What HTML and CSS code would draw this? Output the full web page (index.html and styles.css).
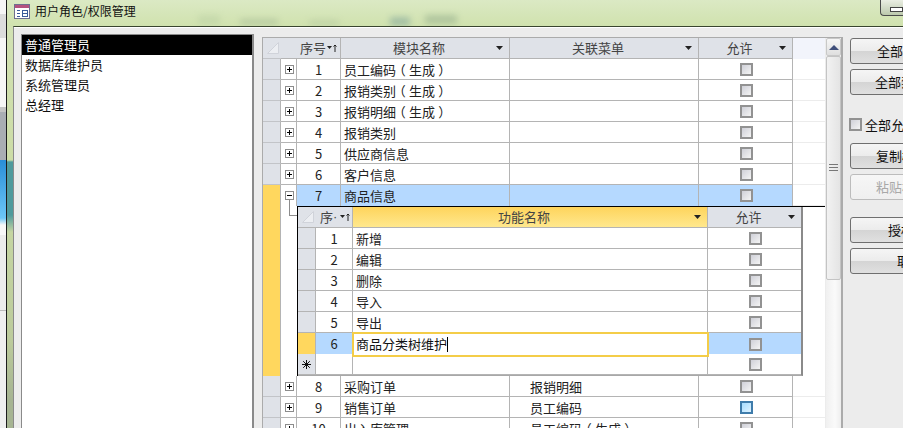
FILE: index.html
```html
<!DOCTYPE html>
<html lang="zh-CN">
<head>
<meta charset="utf-8">
<title>用户角色/权限管理</title>
<link rel="stylesheet" href="styles.css">
</head>
<body>
<svg class="defs" width="0" height="0" aria-hidden="true">
  <symbol id="plus" viewBox="0 0 9 9"><rect x=".5" y=".5" width="8" height="8" fill="#fff" stroke="#8c8c8c"/><path d="M2 4.5h5M4.5 2v5" stroke="#000" fill="none"/></symbol>
  <symbol id="minus" viewBox="0 0 9 9"><rect x=".5" y=".5" width="8" height="8" fill="#fff" stroke="#8c8c8c"/><path d="M2 4.5h5" stroke="#000" fill="none"/></symbol>
  <symbol id="arrow" viewBox="0 0 7 4"><path d="M0 0h7L3.5 4z" fill="#222"/></symbol>
  <symbol id="sort" viewBox="0 0 11 8"><path d="M0 2h5L2.5 5z" fill="#222"/><path d="M8 8V1M6.5 2.5 8 1l1.5 1.5" stroke="#222" fill="none"/></symbol>
  <symbol id="corner" viewBox="0 0 12 12"><path d="M11.5 .5v11H.5z" fill="#eceef2" stroke="#d0d3da"/></symbol>
  <symbol id="star" viewBox="0 0 9 9"><path d="M4.5 0v9M0 4.5h9M1.2 1.2l6.6 6.6M7.8 1.2 1.2 7.8" stroke="#111" fill="none"/></symbol>
</svg>
<div class="screen">
  <div class="behind"></div>
  <div class="window">
    <header class="titlebar">
      <svg class="form-icon" width="16" height="15" viewBox="0 0 16 15" aria-hidden="true">
        <rect x=".5" y=".5" width="15" height="14" fill="#fff" stroke="#6f6f8f"/>
        <rect x="1" y="1" width="14" height="3" fill="#b5527f"/>
        <path d="M3 6.5h3M3 9.5h3M3 12.5h3" stroke="#3a5c9a"/>
        <rect x="8.5" y="6.5" width="5" height="6" fill="#fff" stroke="#3a5c9a"/>
        <path d="M8 9.5h5" stroke="#3a5c9a"/>
      </svg>
      <span class="title">用户角色/权限管理</span>
      <span class="blur blur-a"></span>
      <span class="blur blur-b"></span>
      <span class="blur blur-c"></span>
      <span class="blur blur-d"></span>
      <span class="blur blur-e"></span>
      <span class="winbtn"><span class="winbtn-glyph"></span></span>
    </header>
    <main class="frame">
      <ul class="rolelist">
        <li class="role role-selected">普通管理员</li>
        <li class="role">数据库维护员</li>
        <li class="role">系统管理员</li>
        <li class="role">总经理</li>
      </ul>

      <section class="sheet">
        <div class="sheet-body">
          <div class="row row-head">
            <div class="cell sel head-corner"><svg class="corner" width="12" height="12"><use href="#corner"/></svg></div>
            <div class="cell exp head-exp"></div>
            <div class="cell hd hd-seq">序号<svg class="sort" width="11" height="8"><use href="#sort"/></svg></div>
            <div class="cell hd"><span class="hd-label">模块名称</span><svg class="arrow" width="7" height="4"><use href="#arrow"/></svg></div>
            <div class="cell hd"><span class="hd-label">关联菜单</span><svg class="arrow" width="7" height="4"><use href="#arrow"/></svg></div>
            <div class="cell hd"><span class="hd-label">允许</span><svg class="arrow" width="7" height="4"><use href="#arrow"/></svg></div>
            <div class="blank blank-head"></div>
          </div>

          <div class="row"><div class="cell sel"></div><div class="cell exp"><svg width="9" height="9"><use href="#plus"/></svg></div><div class="cell num">1</div><div class="cell txt">员工编码<span class="paren">（</span>生成<span class="paren">）</span></div><div class="cell menu"></div><div class="cell chk"><span class="box"></span></div><div class="blank"></div></div>
          <div class="row"><div class="cell sel"></div><div class="cell exp"><svg width="9" height="9"><use href="#plus"/></svg></div><div class="cell num">2</div><div class="cell txt">报销类别<span class="paren">（</span>生成<span class="paren">）</span></div><div class="cell menu"></div><div class="cell chk"><span class="box"></span></div><div class="blank"></div></div>
          <div class="row"><div class="cell sel"></div><div class="cell exp"><svg width="9" height="9"><use href="#plus"/></svg></div><div class="cell num">3</div><div class="cell txt">报销明细<span class="paren">（</span>生成<span class="paren">）</span></div><div class="cell menu"></div><div class="cell chk"><span class="box"></span></div><div class="blank"></div></div>
          <div class="row"><div class="cell sel"></div><div class="cell exp"><svg width="9" height="9"><use href="#plus"/></svg></div><div class="cell num">4</div><div class="cell txt">报销类别</div><div class="cell menu"></div><div class="cell chk"><span class="box"></span></div><div class="blank"></div></div>
          <div class="row"><div class="cell sel"></div><div class="cell exp"><svg width="9" height="9"><use href="#plus"/></svg></div><div class="cell num">5</div><div class="cell txt">供应商信息</div><div class="cell menu"></div><div class="cell chk"><span class="box"></span></div><div class="blank"></div></div>
          <div class="row"><div class="cell sel"></div><div class="cell exp"><svg width="9" height="9"><use href="#plus"/></svg></div><div class="cell num">6</div><div class="cell txt">客户信息</div><div class="cell menu"></div><div class="cell chk"><span class="box"></span></div><div class="blank"></div></div>
          <div class="row row-current"><div class="cell sel sel-active"></div><div class="cell exp"><svg width="9" height="9"><use href="#minus"/></svg></div><div class="cell num hi">7</div><div class="cell txt hi">商品信息</div><div class="cell menu hi"></div><div class="cell chk hi"><span class="box"></span></div><div class="blank"></div></div>

          <div class="detail">
            <div class="detail-sel"></div>
            <div class="detail-tree"><span class="tree-line"></span></div>
            <div class="subwrap">
              <div class="subtable">
                <div class="subrow subrow-head">
                  <div class="cell sub-sel head-corner"><svg class="corner" width="12" height="12"><use href="#corner"/></svg></div>
                  <div class="cell hd hd-subseq"><span>序</span><span class="cut-dot">·</span><svg class="sort" width="11" height="8"><use href="#sort"/></svg></div>
                  <div class="cell hd hd-active"><span class="hd-label">功能名称</span><svg class="arrow" width="7" height="4"><use href="#arrow"/></svg></div>
                  <div class="cell hd hd-last"><span class="hd-label">允许</span><svg class="arrow" width="7" height="4"><use href="#arrow"/></svg></div>
                </div>
                <div class="subrow"><div class="cell sub-sel"></div><div class="cell num">1</div><div class="cell txt">新增</div><div class="cell chk chk-last"><span class="box"></span></div></div>
                <div class="subrow"><div class="cell sub-sel"></div><div class="cell num">2</div><div class="cell txt">编辑</div><div class="cell chk chk-last"><span class="box"></span></div></div>
                <div class="subrow"><div class="cell sub-sel"></div><div class="cell num">3</div><div class="cell txt">删除</div><div class="cell chk chk-last"><span class="box"></span></div></div>
                <div class="subrow"><div class="cell sub-sel"></div><div class="cell num">4</div><div class="cell txt">导入</div><div class="cell chk chk-last"><span class="box"></span></div></div>
                <div class="subrow"><div class="cell sub-sel"></div><div class="cell num">5</div><div class="cell txt">导出</div><div class="cell chk chk-last"><span class="box"></span></div></div>
                <div class="subrow"><div class="cell sub-sel sel-active"></div><div class="cell num hi">6</div><div class="cell txt editing">商品分类树维护<span class="caret"></span></div><div class="cell chk chk-last hi"><span class="box"></span></div></div>
                <div class="subrow"><div class="cell sub-sel star-cell"><svg width="9" height="9"><use href="#star"/></svg></div><div class="cell num"></div><div class="cell txt"></div><div class="cell chk chk-last"><span class="box"></span></div></div>
              </div>
            </div>
          </div>

          <div class="row"><div class="cell sel"></div><div class="cell exp"><svg width="9" height="9"><use href="#plus"/></svg></div><div class="cell num">8</div><div class="cell txt">采购订单</div><div class="cell menu">报销明细</div><div class="cell chk"><span class="box"></span></div><div class="blank"></div></div>
          <div class="row"><div class="cell sel"></div><div class="cell exp"><svg width="9" height="9"><use href="#plus"/></svg></div><div class="cell num">9</div><div class="cell txt">销售订单</div><div class="cell menu">员工编码</div><div class="cell chk"><span class="box box-hover"></span></div><div class="blank"></div></div>
          <div class="row"><div class="cell sel"></div><div class="cell exp"><svg width="9" height="9"><use href="#plus"/></svg></div><div class="cell num">10</div><div class="cell txt">出入库管理</div><div class="cell menu">员工编码<span class="paren">（</span>生成<span class="paren">）</span></div><div class="cell chk"><span class="box"></span></div><div class="blank"></div></div>
        </div>
        <div class="scrollbar">
          <div class="scroll-up"><span class="scroll-tri"></span></div>
          <div class="scroll-thumb"><span class="grip"></span></div>
        </div>
      </section>

      <aside class="actions">
        <div class="btn-group">
          <button class="btn ind-27">全部允许</button>
          <button class="btn ind-25">全部禁止</button>
        </div>
        <label class="allow-all"><span class="box box-plain"></span>全部允许</label>
        <div class="btn-group">
          <button class="btn ind-26">复制权限</button>
          <button class="btn btn-disabled ind-26">粘贴权限</button>
        </div>
        <div class="btn-group btn-group-last">
          <button class="btn ind-38">授权</button>
          <button class="btn ind-47">取消</button>
        </div>
      </aside>
    </main>
  </div>
</div>
</body>
</html>
```
FILE: styles.css
```css
* { box-sizing: border-box; }
html, body { margin: 0; padding: 0; height: 100%; overflow: hidden; }
body {
  font-family: "Noto Sans CJK SC", "Liberation Sans", sans-serif;
  font-size: 13px;
  color: #111;
  background: #ececec;
}
.defs { position: absolute; }
svg { display: block; }

.screen { display: flex; width: 903px; height: 428px; overflow: hidden; }

.behind {
  flex: 0 0 6px;
  background: linear-gradient(to bottom,
    #f6f6f6 0 14px, #dcdcdc 14px 38px, #f6f6f6 38px 107px, #c4c4c4 107px 112px,
    #a9adb3 112px 160px, #2a8ed8 160px, #6cc6f6 218px, #f8f8f8 225px 235px,
    #ececec 235px 310px, #bcbcbc 310px 311px, #efefef 311px 428px);
}

.window {
  flex: 1;
  min-width: 0;
  display: flex;
  flex-direction: column;
  border-left: 1px solid #1c1c1c;
  background: linear-gradient(to bottom,
    #d3e3b6 0, #ccdca6 160px, #4f9a9c 162px, #4f9a9c 215px, #c5d5a2 232px, #bccb9c 340px, #a6b492 400px);
}

.titlebar {
  position: relative;
  flex: 0 0 26px;
  display: flex;
  align-items: flex-start;
  padding: 4px 0 0 7px;
  gap: 5px;
  background: linear-gradient(to bottom, #dbe9c4, #d0e2ae);
  overflow: hidden;
}
.form-icon { flex: none; }
.title { font-size: 12px; line-height: 15px; margin-top: -1px; color: #111; }

.blur { position: absolute; background: #93a98a; filter: blur(3px); opacity: .4; }
.blur-a { left: 191px; top: 15px; width: 22px; height: 10px; background: #b4cba0; }
.blur-b { left: 233px; top: 19px; width: 38px; height: 6px; }
.blur-c { left: 302px; top: 20px; width: 30px; height: 6px; background: #a8bd98; }
.blur-d { left: 383px; top: 17px; width: 20px; height: 9px; background: #5f8b90; }
.blur-e { left: 418px; top: 15px; width: 32px; height: 9px; background: #7d9a7d; }

.winbtn {
  position: absolute;
  right: 0;
  top: -3px;
  width: 23px;
  height: 19px;
  border: 1px solid #4b4b4b;
  border-right: 0;
  border-radius: 0 0 0 4px;
  background: linear-gradient(to bottom, #f0f3ea, #bcc9ad);
}
.winbtn-glyph {
  position: absolute;
  left: 9px;
  top: 9px;
  width: 13px;
  height: 5px;
  border: 1px solid #444;
  background: #fff;
}

.frame {
  flex: 1;
  min-height: 0;
  display: flex;
  align-items: flex-start;
  margin-left: 6px;
  padding: 7px 0 0 7px;
  background: #ececec;
  border-top: 1px solid #39452f;
  border-left: 1px solid #8b8b8b;
  box-shadow: inset 0 1px 0 #fff;
  overflow: hidden;
}

.rolelist {
  flex: 0 0 233px;
  height: 400px;
  margin: 0;
  padding: 0;
  list-style: none;
  background: #fff;
  border: 1px solid #8a8a8a;
  border-right-width: 2px;
}
.role {
  height: 20px;
  line-height: 20px;
  padding-left: 3px;
  white-space: nowrap;
}
.role-selected { background: #000; color: #fff; }

.sheet {
  flex: 0 0 581px;
  display: flex;
  height: 400px;
  margin: 3px 0 0 8px;
  background: #fff;
  border: 1px solid #ababab;
  border-right-width: 2px;
  border-bottom: 0;
  overflow: hidden;
}
.sheet-body { flex: 0 0 562px; min-width: 0; }

.row {
  display: grid;
  grid-template-columns: 18px 16px 44px 169px 189px 94px 32px;
  height: 21px;
}
.subrow {
  display: grid;
  grid-template-columns: 18px 37px 355px 93px;
  height: 21px;
}

.cell {
  border-right: 1px solid #b4b4b4;
  border-bottom: 1px solid #b4b4b4;
  line-height: 22px;
  white-space: nowrap;
  overflow: hidden;
  background: #fff;
  color: #222;
}
.blank { border-bottom: 1px solid #ececec; background: #fff; }
.blank-head { background: #f2f4fb; border-bottom-color: #f2f4fb; }

.sel, .sub-sel, .head-corner, .head-exp { background: #dfe2e8; }
.sel { border-bottom-color: #c2c4c8; }
.exp { display: flex; align-items: center; justify-content: center; padding-left: 1px; border-bottom-color: #b4b4b4; }
.head-corner { display: flex; align-items: center; justify-content: flex-end; padding-right: 2px; border-right: 0; }
.head-exp { border-right: 0; }
.corner { flex: none; }

.hd {
  display: flex;
  align-items: center;
  background: #dfe2e8;
  color: #444;
  padding: 0 6px 0 0;
  line-height: 20px;
}
.hd-label { flex: 1; text-align: center; padding-left: 1px; }
.arrow { flex: none; margin-right: 0; }
.hd-seq { padding-left: 3px; padding-right: 0; gap: 1px; }
.hd-subseq { padding-left: 4px; padding-right: 1px; }
.cut-dot { flex: 1; font-family: "Liberation Sans", sans-serif; }
.hd-active { background: linear-gradient(to bottom, #fed45c, #ffe88e); }

.num { text-align: center; }
.txt { padding-left: 3px; }
.menu { padding-left: 20px; }
.paren {
  display: inline-block;
  width: 13px;
  text-align: center;
  font-feature-settings: "halt" 1;
}
.chk { display: flex; align-items: center; justify-content: center; padding-left: 2px; }
.hi { background: #b5d9ff; }
.sel-active { background: #ffd75e; }
.row-current .cell { border-bottom: 0; }
.row-current .sel { border-bottom: 0; }

.box {
  display: inline-block;
  flex: none;
  width: 13px;
  height: 13px;
  border: 2px solid #929292;
  background: linear-gradient(135deg, #cfd0d8, #f4f4f4);
}
.box-hover { border-color: #3f7cab; background: linear-gradient(135deg, #a5dcff, #dff3ff); }
.box-plain { margin-right: 3px; }

.detail {
  display: grid;
  grid-template-columns: 18px 16px 1fr;
  height: 170px;
}
.detail-sel { background: #ffd75e; border-right: 1px solid #b4b4b4; }
.detail-tree { position: relative; background: #fff; }
.tree-line {
  position: absolute;
  left: 8px;
  top: -6px;
  width: 8px;
  height: 16px;
  border-left: 1px solid #8c8c8c;
  border-bottom: 1px solid #8c8c8c;
}
.subwrap { border-top: 1px solid #000; border-left: 1px solid #000; background: #fff; }
.subtable {
  width: 505px;
  border-right: 2px solid #8a8a8a;
  border-bottom: 1px solid #a8a8a8;
  height: 169px;
}
.subrow:last-child { height: 21px; }
.hd-last { border-right: 0; }
.chk-last { border-right: 0; }
.star-cell { display: flex; align-items: center; justify-content: center; }
.sub-sel { border-bottom-color: #b4b4b4; }

.editing { position: relative; outline: 2px solid #f4cd48; outline-offset: -1px; color: #111; overflow: visible; }
.caret {
  display: inline-block;
  width: 1px;
  height: 15px;
  vertical-align: -3px;
  background: #000;
}

.scrollbar {
  flex: 0 0 16px;
  display: flex;
  flex-direction: column;
  background: linear-gradient(to right, #f0f0f0, #fafafa 60%, #eeeeee);
  border-left: 1px solid #ececec;
}
.scroll-up {
  flex: 0 0 18px;
  display: flex;
  align-items: center;
  justify-content: center;
  border: 1px solid #c8c8c8;
  border-radius: 2px;
  background: linear-gradient(to bottom, #f6f6f6, #dfdfdf);
}
.scroll-tri {
  width: 0;
  height: 0;
  border-left: 5px solid transparent;
  border-right: 5px solid transparent;
  border-bottom: 5px solid #3f4f7a;
}
.scroll-thumb {
  flex: 0 0 224px;
  display: flex;
  align-items: center;
  justify-content: center;
  border: 1px solid #c4c4c4;
  border-radius: 2px;
  background: linear-gradient(to right, #f2f2f2, #e4e4e4);
}
.grip {
  width: 9px;
  height: 7px;
  border-top: 1px solid #777;
  border-bottom: 1px solid #777;
  background: linear-gradient(#777, #777) center / 100% 1px no-repeat;
  margin-top: -2px;
}

.actions {
  flex: 0 0 106px;
  display: flex;
  flex-direction: column;
  margin: 4px 0 0 7px;
}
.btn-group { display: flex; flex-direction: column; gap: 5px; }
.btn-group-last { margin-top: 17px; }
.btn {
  width: 106px;
  height: 26px;
  padding: 0 0 2px;
  text-align: left;
  font: inherit;
  color: #111;
  white-space: nowrap;
  border: 1px solid #6f6f6f;
  border-radius: 3px;
  background: linear-gradient(to bottom, #f5f5f5, #ececec 48%, #d4d4d4 50%, #e0e0e0);
}
.btn-disabled { color: #a8a8a8; border-color: #bcbcbc; background: linear-gradient(to bottom, #f6f6f6, #efefef); }
.ind-27 { padding-left: 26px; }
.ind-25 { padding-left: 24px; }
.ind-26 { padding-left: 25px; }
.ind-38 { padding-left: 37px; }
.ind-47 { padding-left: 46px; }

.allow-all {
  display: flex;
  align-items: center;
  height: 15px;
  margin: 22px 0 11px -1px;
  white-space: nowrap;
}
```
